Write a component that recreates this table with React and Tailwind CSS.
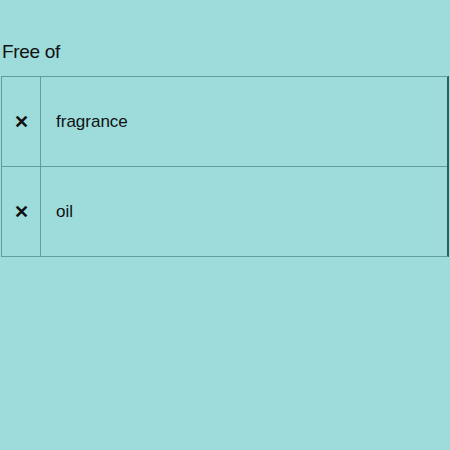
import React from 'react';

const items = ['fragrance', 'oil'];

export default function App() {
  return (
    <div className="min-h-[450px] w-[450px] bg-[#9ddcdb] pt-[40px] text-[#111]" style={{ fontFamily: '"Liberation Sans", Arial, sans-serif' }}>
      <h2 className="pl-[2px] text-[19px] leading-[24px] tracking-[-0.3px]">Free of</h2>
      <div className="ml-[1px] mt-[12px] w-[448px] border-y border-l border-r-2 border-[#5e9f9e] border-r-[#2c5f5e]">
        {items.map((item, i) => (
          <div key={item} className={`flex items-center ${i > 0 ? 'h-[90px] border-t border-[#5e9f9e]' : 'h-[89px]'}`}>
            <div className="flex h-full w-[39px] items-center justify-center border-r border-[#5e9f9e] pl-[1px] pt-[1px] text-[18px] font-bold">
              ✕
            </div>
            <div className="pl-[15px] pt-[1px] text-[17px]">{item}</div>
          </div>
        ))}
      </div>
    </div>
  );
}
